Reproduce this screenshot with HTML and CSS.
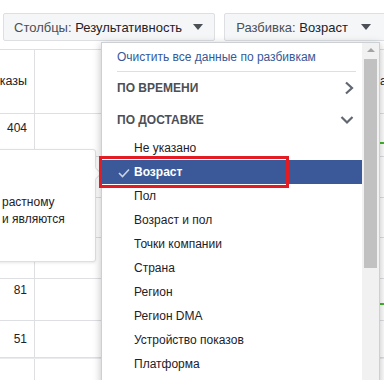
FILE: index.html
```html
<!DOCTYPE html>
<html lang="ru">
<head>
    <meta charset="UTF-8">
    <meta name="viewport" content="width=device-width, initial-scale=1.0">
    <title>Разбивка</title>
    <link rel="stylesheet" href="styles.css">
</head>
<body>
    <div class="toolbar">
        <button class="btn">
            <span class="label">Столбцы:</span>&nbsp;<span class="value">Результативность</span>
            <span class="caret"></span>
        </button>
        <button class="btn wide">
            <span class="label">Разбивка:</span>&nbsp;<span class="value">Возраст</span>
            <span class="caret"></span>
        </button>
    </div>

    <div class="grid">
        <div class="row head">
            <div class="c1"><span>Показы</span></div>
            <div class="c2"></div>
            <div class="c3">ат</div>
        </div>
        <div class="row r1">
            <div class="c1">404</div>
            <div class="c2"></div>
            <div class="c3"><span class="bar"></span></div>
        </div>
        <div class="row r2">
            <div class="c1"></div>
            <div class="c2"></div>
            <div class="c3"></div>
        </div>
        <div class="row r3">
            <div class="c1"></div>
            <div class="c2"></div>
            <div class="c3"></div>
        </div>
        <div class="row r4">
            <div class="c1"></div>
            <div class="c2"></div>
            <div class="c3"></div>
        </div>
        <div class="row r5">
            <div class="c1">81</div>
            <div class="c2"></div>
            <div class="c3"><span class="bar"></span></div>
        </div>
        <div class="row r6">
            <div class="c1">51</div>
            <div class="c2"></div>
            <div class="c3"></div>
        </div>
        <div class="row total">
            <div class="c1"></div>
            <div class="c2"></div>
            <div class="c3"></div>
        </div>
    </div>

    <!-- подсказка слева, частично за краем -->
    <div class="tip">
        растному<br>
        и являются
    </div>

    <div class="dropdown">
        <div class="menu">
            <div class="clear">Очистить все данные по разбивкам</div>
            <div class="divider"></div>
            <div class="group">
                ПО ВРЕМЕНИ
                <svg width="10" height="14" viewBox="0 0 10 14"><polyline points="2,1.5 8,7 2,12.5" fill="none" stroke="#606770" stroke-width="2.2"/></svg>
            </div>
            <div class="group">
                ПО ДОСТАВКЕ
                <svg width="14" height="10" viewBox="0 0 14 10"><polyline points="1.5,2 7,7.5 12.5,2" fill="none" stroke="#606770" stroke-width="2.2"/></svg>
            </div>
            <div class="item">Не указано</div>
            <div class="item selected">
                <svg class="check" width="12" height="10" viewBox="0 0 12 10"><polyline points="1,5 4.5,8.5 11,1.5" fill="none" stroke="#c9d1e3" stroke-width="1.6"/></svg>
                Возраст
            </div>
            <div class="item">Пол</div>
            <div class="item">Возраст и пол</div>
            <div class="item">Точки компании</div>
            <div class="item">Страна</div>
            <div class="item">Регион</div>
            <div class="item">Регион DMA</div>
            <div class="item">Устройство показов</div>
            <div class="item">Платформа</div>
        </div>
        <div class="scrollbar">
            <span class="arrow-up"></span>
            <span class="thumb"></span>
        </div>
    </div>
</body>
</html>
```

FILE: styles.css
```css
body {
    font-family: "Liberation Sans", Arial, sans-serif;
    font-size: 12px;
    color: #1d2129;
    margin: 0;
    padding: 0;
    background-color: #fff;
    width: 384px;
    height: 380px;
    overflow: hidden;
    position: relative;
}

.toolbar {
    display: flex;
    gap: 9px;
    padding: 13px 0 0 3px;
}

.btn {
    display: flex;
    align-items: center;
    height: 28px;
    padding: 0 11px 0 10px;
    background-color: #f5f6f7;
    border: 1px solid #dddfe2;
    border-radius: 2px;
    font-family: inherit;
    font-size: 13px;
    box-sizing: border-box;
}

.btn.wide {
    padding: 0 16px 0 11px;
}

.btn.wide .caret {
    margin-left: 13px;
}

.btn .label {
    color: #4b4f56;
}

.btn .value {
    color: #1d2129;
}

.caret {
    width: 0;
    height: 0;
    margin-left: 11px;
    border-left: 5px solid transparent;
    border-right: 5px solid transparent;
    border-top: 6px solid #4b4f56;
}

.grid {
    margin-top: 8px;
    border-top: 1px solid #dddfe2;
}

.row {
    display: flex;
    border-bottom: 1px solid #dddfe2;
    box-sizing: border-box;
}

.row > div {
    padding-top: 7px;
    box-sizing: border-box;
}

.c1 {
    width: 35px;
    border-right: 1px solid #dddfe2;
    display: flex;
    justify-content: flex-end;
    padding-right: 7px;
    overflow: hidden;
    white-space: nowrap;
    color: #1d2129;
}

.head .c1 {
    font-size: 12.5px;
}

.c2 {
    width: 344px;
    border-right: 1px solid #dddfe2;
}

.c3 {
    flex: 1;
    padding-left: 1px;
    overflow: hidden;
    white-space: nowrap;
}

.row.head {
    height: 64px;
}

.row.head > div {
    padding-top: 24px;
}

.r1 { height: 43px; }
.r2 { height: 41px; }
.r3 { height: 40px; }
.r4 { height: 41px; }
.r5 { height: 42px; }
.r6 { height: 37px; }

.r5 > div {
    padding-top: 4px;
}

.r6 > div {
    padding-top: 11px;
}

.row.total {
    height: 30px;
    border-top: 1px solid #e9ebee;
}

.bar {
    display: block;
    margin-top: 21px;
    height: 2px;
    background-color: #42b72a;
}

.r5 .bar {
    margin-top: 20px;
}

.tip {
    position: absolute;
    left: -20px;
    top: 149px;
    width: 116px;
    height: 113px;
    box-sizing: border-box;
    padding: 44px 0 0 21px;
    line-height: 17px;
    white-space: nowrap;
    background-color: #fff;
    border: 1px solid #dddfe2;
    border-radius: 3px;
    box-shadow: 0 1px 3px rgba(0, 0, 0, 0.1);
    color: #1d2129;
}

.tip::after {
    content: "";
    position: absolute;
    right: -5px;
    top: 19px;
    width: 8px;
    height: 8px;
    background-color: #fff;
    border-top: 1px solid #dddfe2;
    border-right: 1px solid #dddfe2;
    transform: rotate(45deg);
}

.dropdown {
    position: absolute;
    left: 101px;
    top: 42px;
    width: 279px;
    height: 345px;
    display: flex;
    background-color: #fff;
    border: 1px solid #ccd0d5;
    box-sizing: border-box;
    box-shadow: 0 2px 8px rgba(0, 0, 0, 0.25);
}

.menu {
    flex: 1;
}

.clear {
    height: 28px;
    line-height: 28px;
    padding-left: 15px;
    color: #365899;
}

.divider {
    height: 1px;
    margin: 0 6px 0 15px;
    background-color: #dddfe2;
}

.group {
    height: 32px;
    display: flex;
    align-items: center;
    justify-content: space-between;
    padding: 0 8px 0 15px;
    font-weight: bold;
    color: #4b4f56;
}

.item {
    height: 24px;
    line-height: 24px;
    padding-left: 32px;
    color: #1d2129;
    position: relative;
}

.item.selected {
    background-color: #3b5998;
    color: #fff;
    font-weight: bold;
}

.item.selected::after {
    content: "";
    position: absolute;
    left: -3px;
    top: -4px;
    width: 190px;
    height: 32px;
    border: 3px solid #e31b23;
    box-sizing: border-box;
}

.check {
    position: absolute;
    left: 16px;
    top: 8px;
}

.scrollbar {
    width: 17px;
    background-color: #f1f1f1;
    position: relative;
}

.arrow-up {
    position: absolute;
    left: 5px;
    top: 5px;
    width: 0;
    height: 0;
    border-left: 4px solid transparent;
    border-right: 4px solid transparent;
    border-bottom: 4px solid #a3a3a3;
}

.thumb {
    position: absolute;
    left: 2px;
    right: 2px;
    top: 16px;
    height: 209px;
    background-color: #c1c1c1;
}
```
